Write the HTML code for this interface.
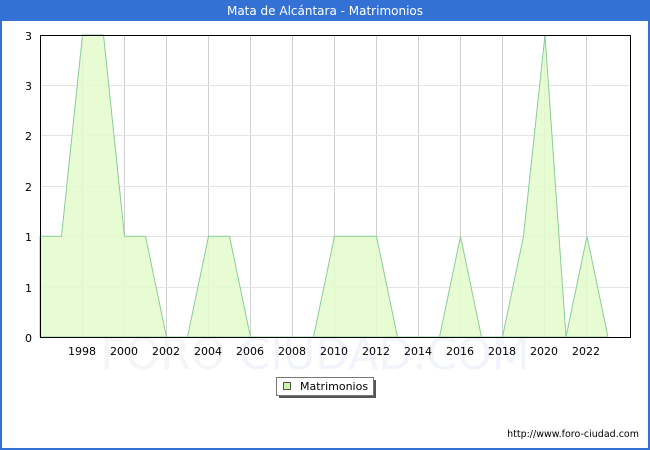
<!DOCTYPE html>
<html><head><meta charset="utf-8"><style>
html,body{margin:0;padding:0;background:#fff;}
body{width:650px;height:450px;overflow:hidden;font-family:"DejaVu Sans","Liberation Sans",sans-serif;}
</style></head><body>
<svg width="650" height="450" xmlns="http://www.w3.org/2000/svg" style="display:block">
<rect x="0" y="0" width="650" height="450" fill="#3372d4"/>
<rect x="2" y="21" width="646" height="427" fill="#fff"/>
<text x="325" y="15" text-anchor="middle" fill="#fff" font-size="12" font-family="DejaVu Sans, sans-serif">Mata de Alcántara - Matrimonios</text>
<text x="315" y="369" text-anchor="middle" font-size="44" font-family="DejaVu Sans, sans-serif"><tspan fill="#f5f5f5">FORO </tspan><tspan fill="#f2f4fc">CIUDAD.COM</tspan></text>
<g stroke="#d0d0d0" stroke-width="1">
<line x1="82.5" y1="35" x2="82.5" y2="337"/><line x1="124.5" y1="35" x2="124.5" y2="337"/><line x1="166.5" y1="35" x2="166.5" y2="337"/><line x1="208.5" y1="35" x2="208.5" y2="337"/><line x1="250.5" y1="35" x2="250.5" y2="337"/><line x1="292.5" y1="35" x2="292.5" y2="337"/><line x1="334.5" y1="35" x2="334.5" y2="337"/><line x1="376.5" y1="35" x2="376.5" y2="337"/><line x1="418.5" y1="35" x2="418.5" y2="337"/><line x1="460.5" y1="35" x2="460.5" y2="337"/><line x1="502.5" y1="35" x2="502.5" y2="337"/><line x1="544.5" y1="35" x2="544.5" y2="337"/><line x1="586.5" y1="35" x2="586.5" y2="337"/>
</g>
<g stroke="#e4e4e4" stroke-width="1">
<line x1="40" y1="85.5" x2="630" y2="85.5"/><line x1="40" y1="135.5" x2="630" y2="135.5"/><line x1="40" y1="186.5" x2="630" y2="186.5"/><line x1="40" y1="236.5" x2="630" y2="236.5"/><line x1="40" y1="287.5" x2="630" y2="287.5"/>
</g>
<polygon points="40,337 40,236.3 61.5,236.3 82.5,35 103.5,35 124.5,236.3 145.5,236.3 166.5,337 187.5,337 208.5,236.3 229.5,236.3 250.5,337 313.5,337 334.5,236.3 376.5,236.3 397.5,337 439.5,337 460.5,236.3 481.5,337 502.5,337 523.5,236.3 545,35 566,337 587,236.3 608,337" fill="#e4fccb" fill-opacity="0.85" stroke="#88cc99" stroke-width="1"/>
<rect x="40.5" y="35.5" width="590" height="302" fill="none" stroke="#000" stroke-width="1"/>
<g font-size="11" fill="#000" text-anchor="end">
<text x="32" y="40">3</text><text x="32" y="90">3</text><text x="32" y="140">2</text><text x="32" y="191">2</text><text x="32" y="241">1</text><text x="32" y="292">1</text><text x="32" y="342">0</text>
</g>
<g font-size="11" fill="#000" text-anchor="middle">
<text x="82" y="355">1998</text><text x="124" y="355">2000</text><text x="166" y="355">2002</text><text x="208" y="355">2004</text><text x="250" y="355">2006</text><text x="292" y="355">2008</text><text x="334" y="355">2010</text><text x="376" y="355">2012</text><text x="418" y="355">2014</text><text x="460" y="355">2016</text><text x="502" y="355">2018</text><text x="544" y="355">2020</text><text x="586" y="355">2022</text>
</g>
<rect x="279" y="380" width="97" height="18" fill="#555"/>
<rect x="276.5" y="377.5" width="97" height="18" fill="#fff" stroke="#777"/>
<rect x="283.5" y="382.5" width="7" height="7" fill="#ccf5a0" stroke="#555"/>
<text x="300" y="390" font-size="11" fill="#000">Matrimonios</text>
<text x="639" y="437" font-size="9.5" fill="#000" text-anchor="end">http://www.foro-ciudad.com</text>
</svg>
</body></html>
